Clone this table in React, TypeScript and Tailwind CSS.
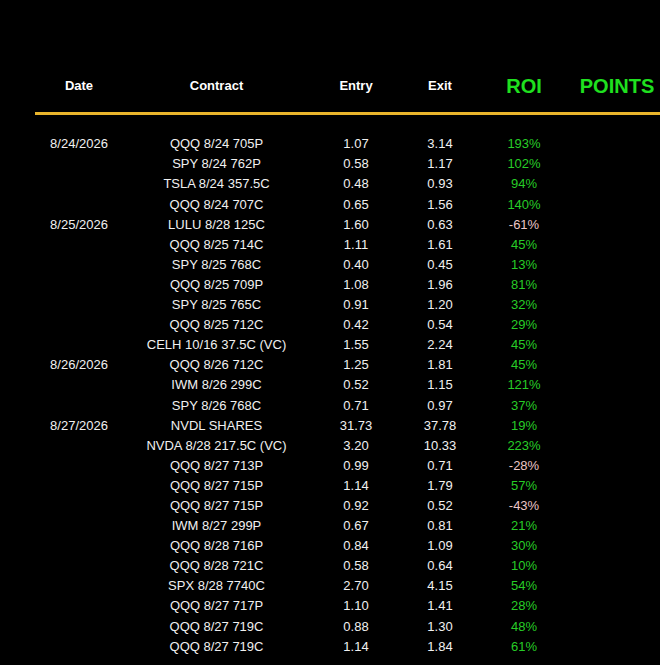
type Trade = {
  date?: string
  contract: string
  entry: string
  exit: string
  roi: string
}

const trades: Trade[] = [
  { date: '8/24/2026', contract: 'QQQ 8/24 705P', entry: '1.07', exit: '3.14', roi: '193%' },
  { contract: 'SPY 8/24 762P', entry: '0.58', exit: '1.17', roi: '102%' },
  { contract: 'TSLA 8/24 357.5C', entry: '0.48', exit: '0.93', roi: '94%' },
  { contract: 'QQQ 8/24 707C', entry: '0.65', exit: '1.56', roi: '140%' },
  { date: '8/25/2026', contract: 'LULU 8/28 125C', entry: '1.60', exit: '0.63', roi: '-61%' },
  { contract: 'QQQ 8/25 714C', entry: '1.11', exit: '1.61', roi: '45%' },
  { contract: 'SPY 8/25 768C', entry: '0.40', exit: '0.45', roi: '13%' },
  { contract: 'QQQ 8/25 709P', entry: '1.08', exit: '1.96', roi: '81%' },
  { contract: 'SPY 8/25 765C', entry: '0.91', exit: '1.20', roi: '32%' },
  { contract: 'QQQ 8/25 712C', entry: '0.42', exit: '0.54', roi: '29%' },
  { contract: 'CELH 10/16 37.5C (VC)', entry: '1.55', exit: '2.24', roi: '45%' },
  { date: '8/26/2026', contract: 'QQQ 8/26 712C', entry: '1.25', exit: '1.81', roi: '45%' },
  { contract: 'IWM 8/26 299C', entry: '0.52', exit: '1.15', roi: '121%' },
  { contract: 'SPY 8/26 768C', entry: '0.71', exit: '0.97', roi: '37%' },
  { date: '8/27/2026', contract: 'NVDL SHARES', entry: '31.73', exit: '37.78', roi: '19%' },
  { contract: 'NVDA 8/28 217.5C (VC)', entry: '3.20', exit: '10.33', roi: '223%' },
  { contract: 'QQQ 8/27 713P', entry: '0.99', exit: '0.71', roi: '-28%' },
  { contract: 'QQQ 8/27 715P', entry: '1.14', exit: '1.79', roi: '57%' },
  { contract: 'QQQ 8/27 715P', entry: '0.92', exit: '0.52', roi: '-43%' },
  { contract: 'IWM 8/27 299P', entry: '0.67', exit: '0.81', roi: '21%' },
  { contract: 'QQQ 8/28 716P', entry: '0.84', exit: '1.09', roi: '30%' },
  { contract: 'QQQ 8/28 721C', entry: '0.58', exit: '0.64', roi: '10%' },
  { contract: 'SPX 8/28 7740C', entry: '2.70', exit: '4.15', roi: '54%' },
  { contract: 'QQQ 8/27 717P', entry: '1.10', exit: '1.41', roi: '28%' },
  { contract: 'QQQ 8/27 719C', entry: '0.88', exit: '1.30', roi: '48%' },
  { contract: 'QQQ 8/27 719C', entry: '1.14', exit: '1.84', roi: '61%' },
]

const cols = 'grid grid-cols-[88px_187px_92px_76px_92px_94px] text-center'

export default function App() {
  return (
    <div
      className="w-[660px] h-[665px] overflow-hidden bg-black text-[#f0f0f0]"
      style={{ fontFamily: '"Liberation Sans", Arial, sans-serif' }}
    >
      <div className="pt-[70px] pl-[35px]">
        {/* header */}
        <div className={`${cols} h-[32px] items-center text-[13px] font-bold text-white`}>
          <div>Date</div>
          <div>Contract</div>
          <div>Entry</div>
          <div>Exit</div>
          <div className="text-[20px] text-[#1fe01f]">ROI</div>
          <div className="text-[20px] text-[#1fe01f]">POINTS</div>
        </div>
        <div className="mt-[10px] h-[3px] bg-[#e9b52c]" />

        {/* rows */}
        <div className="pt-[19px] text-[13px]">
          {trades.map((t, i) => (
            <div key={i} className={`${cols} h-[20.1px] items-center`}>
              <div>{t.date ?? ''}</div>
              <div>{t.contract}</div>
              <div>{t.entry}</div>
              <div>{t.exit}</div>
              <div className={t.roi.startsWith('-') ? 'text-[#ecc6c6]' : 'text-[#27cc27]'}>{t.roi}</div>
              <div />
            </div>
          ))}
        </div>
      </div>
    </div>
  )
}
